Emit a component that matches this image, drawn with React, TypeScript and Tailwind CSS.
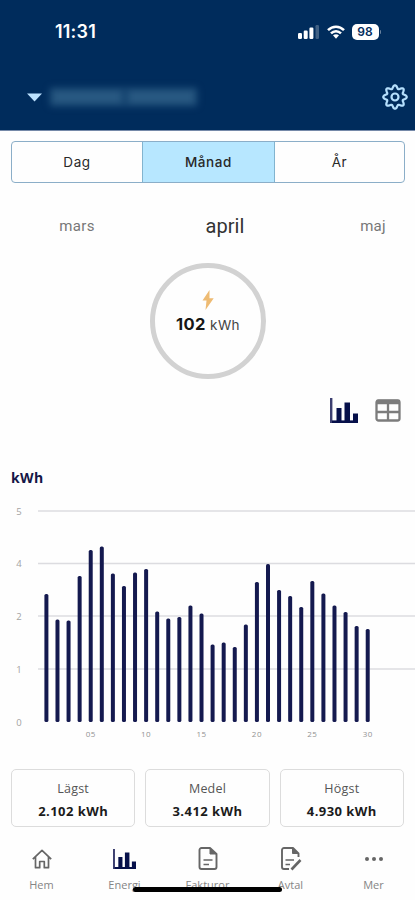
import React from 'react';

const usage = [
  128, 102.5, 101.5, 146, 172, 175.5, 148.5, 136, 149.5, 153, 110.5, 103.5, 105, 116.5, 108.5,
  77.5, 79.5, 75, 97.5, 140, 158, 132, 126, 115, 141, 128.5, 116.5, 110, 96, 93,
];

const gridLines = [
  { label: '5', y: 11.5 },
  { label: '4', y: 64 },
  { label: '2', y: 116.5 },
  { label: '1', y: 169.5 },
];

const stats = [
  { label: 'Lägst', value: '2.102 kWh' },
  { label: 'Medel', value: '3.412 kWh' },
  { label: 'Högst', value: '4.930 kWh' },
];

// eight rounded teeth around the centre
const gearPoints = Array.from({ length: 96 }, (_, i) => {
  const angle = (i / 96) * Math.PI * 2;
  const radius = 10.1 + 1.7 * Math.cos(angle * 8);
  return `${(13 + radius * Math.cos(angle)).toFixed(2)},${(13 + radius * Math.sin(angle)).toFixed(2)}`;
}).join(' ');

const BarsIcon: React.FC<{ className: string }> = ({ className }) => (
  <svg viewBox="0 0 28 25" className={className} preserveAspectRatio="none">
    <path d="M1.200 0v24h27" fill="none" stroke="#3c3f70" strokeWidth="2.400" />
    <path d="M6.500 10h5v14h-5zM14.500 4.500h5.500V24h-5.500zM23 15.500h5V24h-5z" fill="#06104a" />
    <path d="M2 22.500h26V25H2z" fill="#06104a" />
  </svg>
);

const TableIcon = () => (
  <svg viewBox="0 0 26 23" className="w-[26px] h-[23px]" fill="none" stroke="#7c7c7c" strokeWidth="2.300">
    <rect x="1.500" y="1.500" width="23" height="20" rx="2" />
    <path d="M1.500 3h23" strokeWidth="4.500" />
    <path d="M13 4v17M2 13h22" />
  </svg>
);

const GearIcon = () => (
  <svg viewBox="0 0 26 26" className="w-[26px] h-[26px]" fill="none" stroke="#b5dffc" strokeWidth="2.200" strokeLinejoin="round">
    <polygon points={gearPoints} />
    <circle cx="13" cy="13" r="3.500" />
  </svg>
);

const HomeIcon = () => (
  <svg viewBox="0 0 20 20" className="w-5 h-5" fill="none" stroke="#666" strokeWidth="1.700" strokeLinejoin="round">
    <path d="M.8 10.200 10 1.300l9.200 8.900M3.500 8v10.700h4.200v-6.200h4.600v6.200h4.200V8" />
  </svg>
);

const FileIcon: React.FC<{ edit?: boolean }> = ({ edit }) => (
  <svg viewBox="0 0 22 24" className="w-[22px] h-6" fill="none" stroke="#666" strokeWidth="1.900" strokeLinejoin="round">
    {edit ? (
      <>
        <path d="M9 22H4a2 2 0 0 1-2-2V3a2 2 0 0 1 2-2h9l5.500 5.500V10" />
        <path d="m11.500 22.500 9-9.500" strokeWidth="2.600" />
      </>
    ) : (
      <path d="M13 1H4.500a2 2 0 0 0-2 2v17a2 2 0 0 0 2 2h13a2 2 0 0 0 2-2V7z" />
    )}
    <path d={edit ? 'M12.500 1v5.500H18z' : 'M13 1v6h6z'} fill="#666" strokeWidth="1" />
    <path d={edit ? 'M5.500 13h8.500M5.500 17.500h4.500' : 'M6.500 13h9M6.500 17.500h5.500'} strokeWidth="1.600" />
  </svg>
);

const StatusBar = () => (
  <div className="h-16 pl-[55px] pr-[34px] flex items-center justify-between">
    <span className="font-['Inter'] font-semibold text-[18px] tracking-[0.2px] leading-none">11:31</span>
    <div className="flex items-center">
      <svg viewBox="0 0 22 14" className="w-[22px] h-[14px] mr-[7px]" fill="#fff">
        <rect x="0" y="8" width="4" height="6" rx="1.200" />
        <rect x="5.700" y="5.500" width="4" height="8.500" rx="1.200" />
        <rect x="11.400" y="2.500" width="4" height="11.500" rx="1.200" />
        <rect x="17.500" y="0" width="3.500" height="14" rx="1.200" opacity=".25" />
      </svg>
      <svg viewBox="0 0 18 14" className="w-[18px] h-[14px] mr-[7px]" fill="none" stroke="#fff" strokeWidth="2.500">
        <path d="M1 5.200c4.600-4.700 11.400-4.700 16 0" />
        <path d="M4 8.400c2.900-2.900 7.100-2.900 10 0" />
        <path d="M6 10.300c1.800-1.500 4.200-1.500 6 0L9 13.700z" fill="#fff" stroke="none" />
      </svg>
      <span className="w-[27px] h-4 rounded-[5px] bg-white text-[#002c5c] flex items-center justify-center font-['Inter'] font-semibold text-[12px] leading-none">
        98
      </span>
      <span className="w-[1.500px] h-1 ml-px rounded-r bg-white/40" />
    </div>
  </div>
);

const UsageChart = () => (
  <svg viewBox="0 0 415 250" className="block w-full h-[250px]" fontFamily="'Open Sans', sans-serif">
    {gridLines.map(({ label, y }) => (
      <g key={label}>
        <line x1="38" x2="415" y1={y - 0.5} y2={y - 0.5} stroke="#dcdce0" strokeWidth="1.700" />
        <text x="19" y={y + 3} textAnchor="middle" fontSize="9.500" fill="#a3a3a3">{label}</text>
      </g>
    ))}
    <text x="19" y="225.500" textAnchor="middle" fontSize="9.500" fill="#a3a3a3">0</text>
    {usage.map((height, i) => (
      <rect key={i} x={44.400 + i * 11.080} y={222 - height} width="4" height={height} rx="1.600" fill="#14194f" />
    ))}
    {[5, 10, 15, 20, 25, 30].map((day) => (
      <text key={day} x={46.400 + (day - 1) * 11.080} y="236.500" textAnchor="middle" fontSize="8" letterSpacing=".5" fill="#929292">
        {String(day).padStart(2, '0')}
      </text>
    ))}
  </svg>
);

const BottomNav = () => {
  const items = [
    { label: 'Hem', icon: <HomeIcon /> },
    { label: 'Energi', icon: <BarsIcon className="w-[23px] h-5" /> },
    { label: 'Fakturor', icon: <FileIcon /> },
    { label: 'Avtal', icon: <FileIcon edit /> },
    {
      label: 'Mer',
      icon: (
        <svg viewBox="0 0 18 4" className="w-[18px] h-1" fill="#666">
          <circle cx="2" cy="2" r="2" />
          <circle cx="9" cy="2" r="2" />
          <circle cx="16" cy="2" r="2" />
        </svg>
      ),
    },
  ];

  return (
    <nav className="relative h-[73px] grid grid-cols-5">
      {items.map(({ label, icon }) => (
        <div key={label} className="flex flex-col items-center">
          <div className="mt-5 h-6 flex items-center">{icon}</div>
          <span className="mt-[6px] text-[11px] leading-[15px] text-[#858585]">{label}</span>
        </div>
      ))}
      {/* home indicator */}
      <div className="absolute left-[133px] top-[60px] w-[149px] h-[5px] rounded-full bg-black" />
    </nav>
  );
};

const App: React.FC = () => {
  return (
    <div className="w-[415px] h-[900px] overflow-hidden bg-[#fefefe] font-['Open_Sans',sans-serif] flex flex-col">
      <header className="h-[131px] shrink-0 bg-[#002c5c] border-b border-[#7589a8] text-white">
        <StatusBar />
        <div className="h-[66px] flex items-center pl-[27px] pr-[7px]">
          <svg viewBox="0 0 15 9" className="w-[15px] h-[9px]" fill="#bce2ff">
            <path d="M0 .5h15L7.500 8.500z" />
          </svg>
          <div className="ml-[7px] w-[149px] h-[20px] flex gap-2 bg-[#174672] rounded-sm blur-[3px] px-1 py-1">
            <div className="w-[68px] bg-[#285982]" />
            <div className="flex-1 bg-[#285982]" />
          </div>
          <div className="ml-auto">
            <GearIcon />
          </div>
        </div>
      </header>

      <div className="mt-[10px] ml-[11px] w-[394px] h-[42px] shrink-0 grid grid-cols-[130px_133px_1fr] border border-[#8baec8] rounded-[4px] overflow-hidden font-['Inter'] text-[13.5px] tracking-[0.6px] text-[#292929]">
        <div className="flex items-center justify-center">Dag</div>
        <div className="flex items-center justify-center bg-[#b7e7ff] border-x border-[#82b4cf] font-medium">Månad</div>
        <div className="flex items-center justify-center">År</div>
      </div>

      <div className="h-[80px] shrink-0 grid grid-cols-[154px_142px_119px] items-center text-center pt-[6px] font-['Roboto'] text-[#777]">
        <span className="text-[15px] tracking-[0.4px]">mars</span>
        <span className="text-[20px] tracking-[0.1px] text-[#333]">april</span>
        <span className="text-[15px] tracking-[0.2px] pl-[35px]">maj</span>
      </div>

      <div className="ml-[150px] w-[116px] h-[116px] shrink-0 rounded-full border-[5px] border-[#d2d2d2] flex flex-col items-center">
        <svg viewBox="0 0 12 20" className="mt-[22px] w-3 h-5" fill="#eebb73">
          <path d="M7.500 0 .5 10.500h4L3.500 20 11.700 8.200H7.500z" />
        </svg>
        <div className="mt-[4px] font-['Inter'] text-[13.5px] leading-5 tracking-[0.4px] text-[#444] whitespace-nowrap">
          <strong className="text-[16.5px] font-bold text-[#161616]">102</strong> kWh
        </div>
      </div>

      <div className="mt-[18px] h-[27px] shrink-0 pr-[14px] flex items-center justify-end gap-[17px]">
        <BarsIcon className="w-7 h-[25px]" />
        <TableIcon />
      </div>

      <h2 className="mt-[44px] ml-[11px] h-[20px] shrink-0 text-[14px] leading-5 tracking-[0.4px] font-bold text-[#151747]">kWh</h2>

      <div className="mt-[12px] shrink-0">
        <UsageChart />
      </div>

      <div className="mt-[19px] mx-[11px] h-[58px] shrink-0 grid grid-cols-3 gap-[10px]">
        {stats.map(({ label, value }) => (
          <div key={label} className="border border-[#dcdcdc] rounded-[5px] flex flex-col items-center pt-[10px]">
            <span className="text-[12.5px] leading-[18px] tracking-[0.2px] text-[#555]">{label}</span>
            <span className="mt-1 text-[13px] leading-[18px] tracking-[0.45px] font-bold text-[#1b1b1b]">{value}</span>
          </div>
        ))}
      </div>

      <BottomNav />
    </div>
  );
};

export default App;
